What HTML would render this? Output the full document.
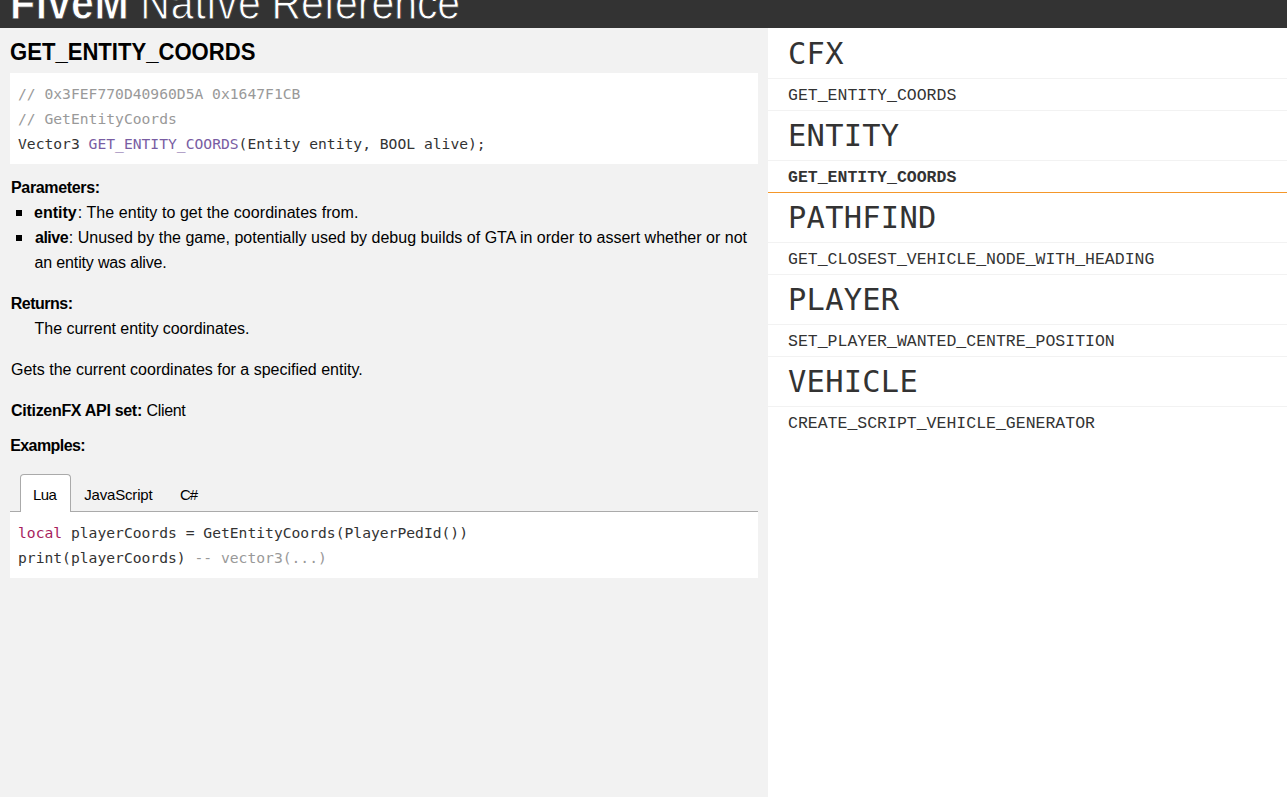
<!DOCTYPE html>
<html lang="en">
<head>
<meta charset="utf-8">
<title>FiveM Native Reference</title>
<style>
html,body{margin:0;padding:0;}
body{width:1287px;height:797px;overflow:hidden;background:#f2f2f2;font-family:"Liberation Sans",sans-serif;color:#000;position:relative;}
#hdr{z-index:5;position:absolute;left:0;top:0;width:1287px;height:28px;background:#333;overflow:hidden;}
#hdr h1{margin:0;font-size:41px;line-height:40px;font-weight:normal;color:#fff;white-space:nowrap;}
#hdr h1 span{position:absolute;top:-15px;transform:scaleY(1.12);transform-origin:0 34px;}
#h1a{left:10px;font-weight:bold;letter-spacing:0.6px;-webkit-text-stroke:0.7px #333;}
#h1b{left:140.2px;letter-spacing:0.9px;-webkit-text-stroke:0.8px #333;}
#h1c{left:271.4px;letter-spacing:-0.05px;-webkit-text-stroke:0.8px #333;}
#left{position:absolute;left:0;top:0;width:768px;height:797px;background:#f2f2f2;}
#right{position:absolute;left:768px;top:0;width:519px;height:797px;background:#fff;font-family:"DejaVu Sans Mono","Liberation Mono",monospace;color:#333;}
h2{position:absolute;left:10px;top:37px;margin:0;font-size:24px;line-height:30px;font-weight:bold;white-space:nowrap;transform:scaleX(0.92);transform-origin:0 0;}
.code{position:absolute;left:10px;width:748px;background:#fff;font-family:"DejaVu Sans Mono","Liberation Mono",monospace;font-size:14.66px;color:#333;}
.code div{position:absolute;left:8px;white-space:pre;line-height:25px;height:25px;}
.cm{color:#999;}
.fn{color:#795da3;}
.kw{color:#a71d5d;}
.t{position:absolute;font-size:16px;line-height:25px;white-space:nowrap;}
.t.b{font-weight:bold;}
#tb1,#tb2,#tb3{font-size:15px;}
.sq{position:absolute;left:16px;width:6px;height:6px;background:#000;}
.sec{position:absolute;left:0;width:519px;}
.sec .h{position:absolute;left:20px;top:1px;font-size:30.4px;letter-spacing:0.27px;line-height:50px;height:50px;white-space:nowrap;}
.sec .hl{position:absolute;left:0;top:50px;width:519px;height:1px;background:#f2f2f2;}
.sec .i{position:absolute;left:20px;top:52px;font-family:"Liberation Mono","DejaVu Sans Mono",monospace;font-size:16.5px;line-height:31px;height:31px;white-space:nowrap;}
.sec .il{position:absolute;left:0;top:82px;width:519px;height:1px;background:#f2f2f2;}
.sec .i.act{font-weight:bold;}
.sec .il.act{background:#f4972a;}
#tabline{position:absolute;left:10px;top:511px;width:748px;height:1px;background:#aaa;}
#tabact{position:absolute;left:20px;top:474px;width:49px;height:37px;border:1px solid #aaa;border-bottom:none;border-radius:4px 4px 0 0;background:#fff;}
</style>
</head>
<body>
<div id="hdr"><h1><span id="h1a">FiveM</span> <span id="h1b">Native</span> <span id="h1c">Reference</span></h1></div>
<div id="left">
<h2>GET_ENTITY_COORDS</h2>
<div class="code" style="top:73px;height:91px;">
<div style="top:8px" class="cm">// 0x3FEF770D40960D5A 0x1647F1CB</div>
<div style="top:33px" class="cm">// GetEntityCoords</div>
<div style="top:58px">Vector3 <span class="fn">GET_ENTITY_COORDS</span>(Entity entity, BOOL alive);</div>
</div>
<div class="t b" id="t1" style="left:11.00px;top:175px;letter-spacing:-0.340px;">Parameters:</div>
<div class="sq" style="top:210px;"></div>
<div class="t b" id="t2a" style="left:34.00px;top:200px;letter-spacing:0.000px;">entity</div>
<div class="t" id="t2b" style="left:77.80px;top:200px;letter-spacing:0.062px;">: The entity to get the coordinates from.</div>
<div class="sq" style="top:235px;"></div>
<div class="t b" id="t3a" style="left:35.00px;top:225px;letter-spacing:-0.500px;">alive</div>
<div class="t" id="t3b" style="left:68.80px;top:225px;letter-spacing:0.008px;">: Unused by the game, potentially used by debug builds of GTA in order to assert whether or not</div>
<div class="t" id="t4" style="left:34.60px;top:250px;letter-spacing:-0.158px;">an entity was alive.</div>
<div class="t b" id="t5" style="left:10.80px;top:291px;letter-spacing:-0.514px;">Returns:</div>
<div class="t" id="t6" style="left:34.60px;top:316px;letter-spacing:-0.041px;">The current entity coordinates.</div>
<div class="t" id="t7" style="left:11.00px;top:357px;letter-spacing:-0.004px;">Gets the current coordinates for a specified entity.</div>
<div class="t b" id="t8a" style="left:11.10px;top:398px;letter-spacing:-0.305px;">CitizenFX API set:</div>
<div class="t" id="t8b" style="left:146.60px;top:398px;letter-spacing:-0.360px;">Client</div>
<div class="t b" id="t9" style="left:10.20px;top:433px;letter-spacing:-0.577px;">Examples:</div>
<div id="tabline"></div>
<div id="tabact"></div>
<div class="t" id="tb1" style="left:33.00px;top:482px;letter-spacing:-0.650px;">Lua</div>
<div class="t" id="tb2" style="left:84.20px;top:482px;letter-spacing:-0.173px;">JavaScript</div>
<div class="t" id="tb3" style="left:180.00px;top:482px;letter-spacing:-1.200px;">C#</div>
<div class="code" style="top:512px;height:66px;">
<div style="top:8px"><span class="kw">local</span> playerCoords = GetEntityCoords(PlayerPedId())</div>
<div style="top:33px">print(playerCoords) <span class="cm">-- vector3(...)</span></div>
</div>
</div>
<div id="right">
<div class="sec" style="top:28px"><div class="h">CFX</div><div class="hl"></div><div class="i">GET_ENTITY_COORDS</div><div class="il"></div></div>
<div class="sec" style="top:110px"><div class="h">ENTITY</div><div class="hl"></div><div class="i act">GET_ENTITY_COORDS</div><div class="il act"></div></div>
<div class="sec" style="top:192px"><div class="h">PATHFIND</div><div class="hl"></div><div class="i">GET_CLOSEST_VEHICLE_NODE_WITH_HEADING</div><div class="il"></div></div>
<div class="sec" style="top:274px"><div class="h">PLAYER</div><div class="hl"></div><div class="i">SET_PLAYER_WANTED_CENTRE_POSITION</div><div class="il"></div></div>
<div class="sec" style="top:356px"><div class="h">VEHICLE</div><div class="hl"></div><div class="i">CREATE_SCRIPT_VEHICLE_GENERATOR</div></div>
</div>
</body>
</html>
